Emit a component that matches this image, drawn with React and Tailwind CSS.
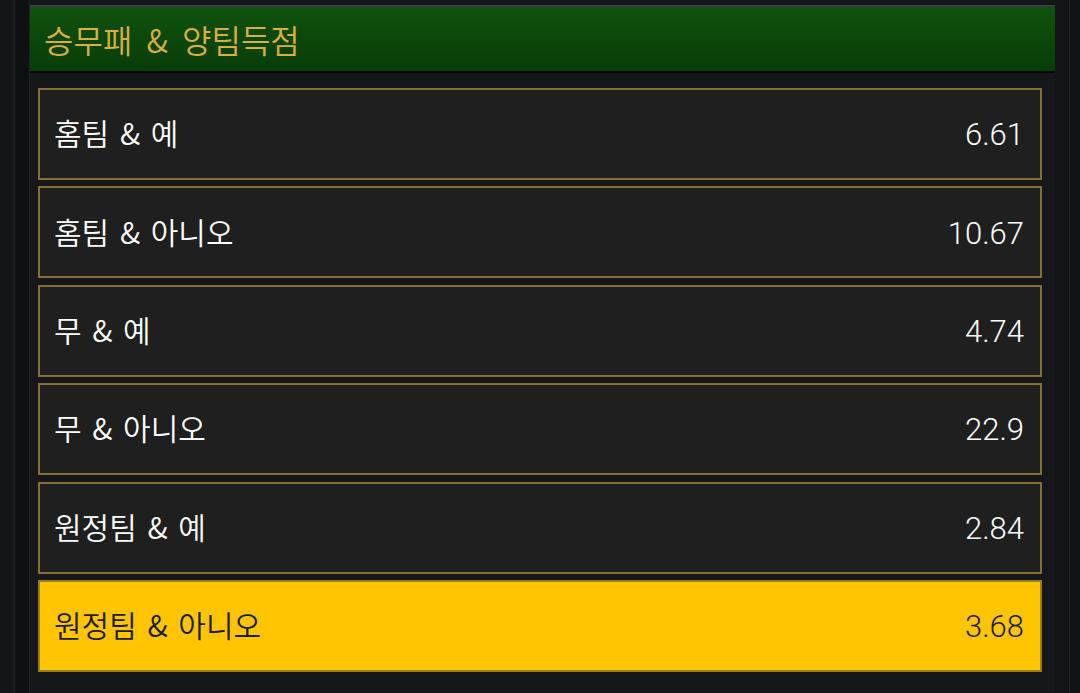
export default function App() {
  const rows = [
    ["홈팀 & 예", "6.61"],
    ["홈팀 & 아니오", "10.67"],
    ["무 & 예", "4.74"],
    ["무 & 아니오", "22.9"],
    ["원정팀 & 예", "2.84"],
    ["원정팀 & 아니오", "3.68", true],
  ];
  return (
    <div
      className="flex h-[693px] w-[1080px] overflow-hidden bg-[#141518]"
      style={{ fontFamily: '"Noto Sans CJK KR", "Noto Sans", sans-serif' }}
    >
      <div className="w-[13px] shrink-0 bg-[#141518]" />
      <div className="w-[2px] shrink-0 bg-[#1e2024]" />
      <div className="w-[14px] shrink-0 bg-[#0f1012]" />
      <div className="flex w-[1026px] shrink-0 flex-col border-l border-[#202327] bg-[#15171a]">
        <div className="h-[5px] bg-[#141518]" />
        <div className="h-[2px] bg-[#3b3e40]" />
        <div className="flex h-[64px] items-center bg-gradient-to-b from-[#10520f] to-[#073d06] pl-[14px] text-[32px] font-[350] text-[#dcae3c] [word-spacing:7px]">
          승무패 &amp; 양팀득점
        </div>
        <div className="h-[2px] bg-[#050505]" />
        <div className="flex flex-col gap-[6.4px] pl-[8px] pr-[13px] pt-[15px]">
          {rows.map(([label, odd, sel]) => (
            <div
              key={label}
              className={
                sel
                  ? "flex h-[92px] items-center border-2 border-[#9a7f22] bg-[#fec500] pl-[14px] pr-[16px] pt-[1px] text-[30px] font-[350] text-[#1c1c1c]"
                  : "flex h-[92px] items-center border-2 border-[#856f32] bg-[#1f1f1f] pl-[14px] pr-[16px] pt-[1px] text-[30px] font-[350] text-white"
              }
            >
              <div className="flex w-full items-baseline justify-between">
                <span className="[word-spacing:4px]">{label}</span>
                <span className="font-['Roboto',sans-serif] text-[31px] font-light">{odd}</span>
              </div>
            </div>
          ))}
        </div>
      </div>
      <div className="w-[14px] shrink-0 bg-[#131417]" />
      <div className="w-[1px] shrink-0 bg-[#1e2024]" />
      <div className="flex-1 bg-[#121316]" />
    </div>
  );
}
